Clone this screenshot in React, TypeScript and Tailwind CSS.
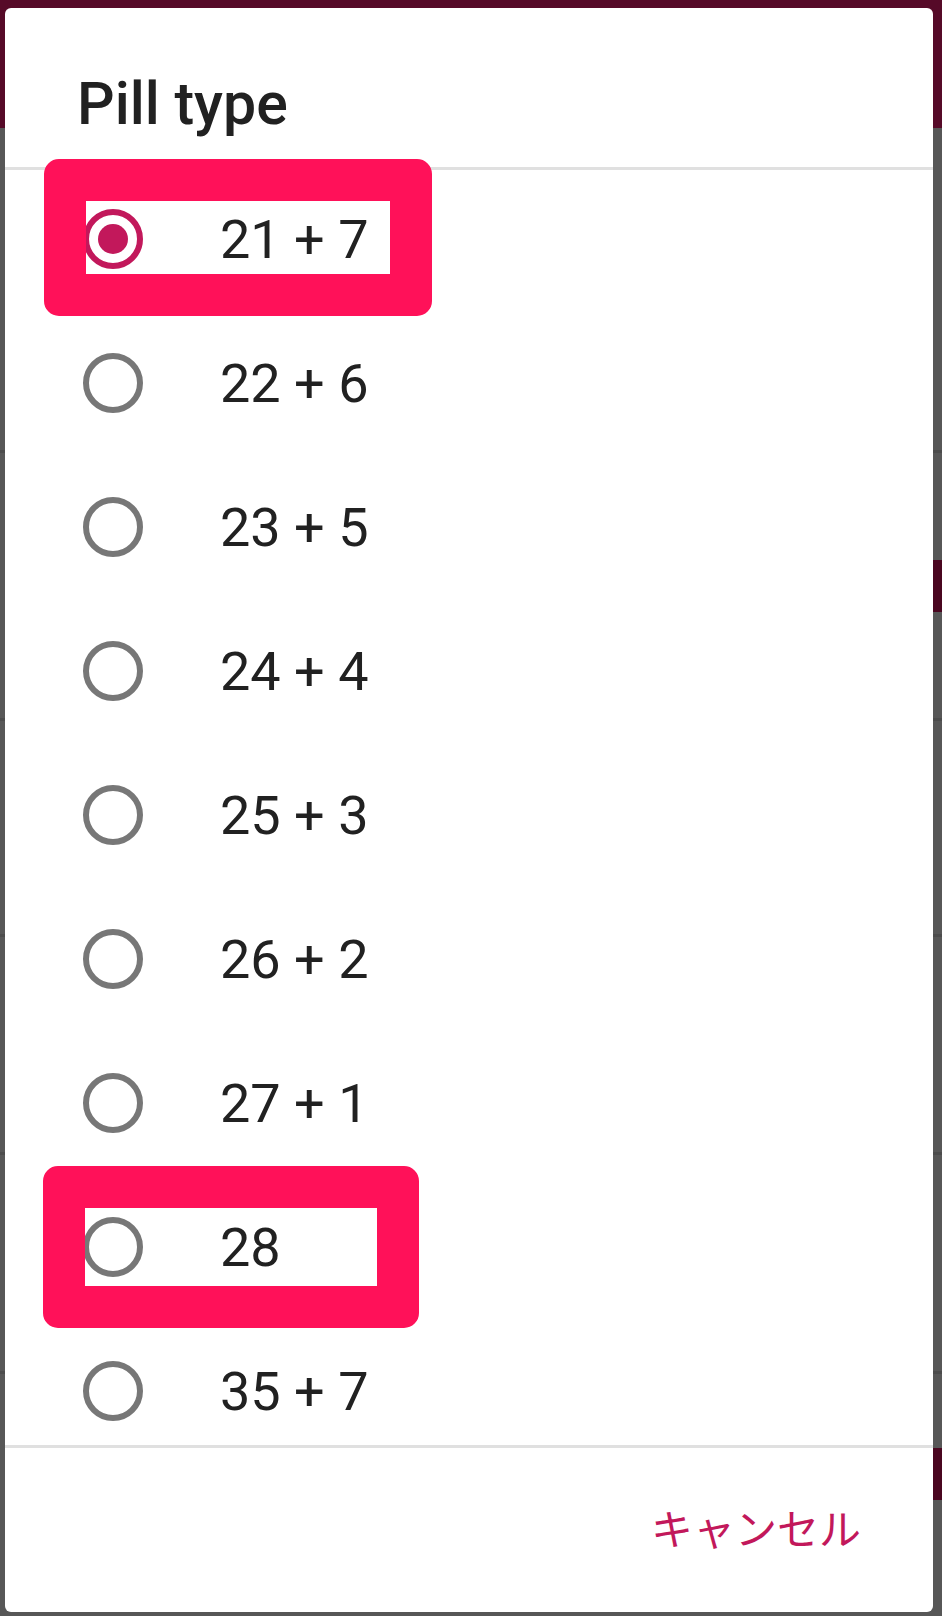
const options = ['21 + 7', '22 + 6', '23 + 5', '24 + 4', '25 + 3', '26 + 2', '27 + 1', '28', '35 + 7'];

function Radio({ checked }: { checked: boolean }) {
  return (
    <div
      className={
        checked
          ? 'w-[60px] h-[60px] rounded-full border-[6px] border-[#c2185b] flex items-center justify-center shrink-0'
          : 'w-[60px] h-[60px] rounded-full border-[6px] border-[#777777] shrink-0'
      }
    >
      {checked && <div className="w-[30px] h-[30px] rounded-full bg-[#c2185b]" />}
    </div>
  );
}

export default function App() {
  return (
    <div
      className="relative w-[942px] h-[1616px] overflow-hidden bg-[#575757]"
      style={{ fontFamily: 'Roboto, "Noto Sans CJK JP", sans-serif' }}
    >
      {/* dimmed page behind the dialog */}
      <div className="flex flex-col">
        <div className="h-[128px] bg-[#560a28]" />
        <div className="h-[325px] border-b-[3px] border-[#4c4c4c]" />
        <div className="h-[268px] border-b-[3px] border-[#4c4c4c] flex justify-end items-center">
          <div className="w-[40px] h-[52px] rounded-[10px] bg-[#4a0620] -mr-[20px]" />
        </div>
        <div className="h-[216px] border-b-[3px] border-[#4c4c4c]" />
        <div className="h-[218px] border-b-[3px] border-[#4c4c4c]" />
        <div className="h-[219px] border-b-[3px] border-[#4c4c4c]" />
        <div className="h-[200px] flex justify-end items-center">
          <div className="w-[40px] h-[52px] rounded-[10px] bg-[#4a0620] -mr-[20px]" />
        </div>
      </div>

      {/* dialog */}
      <div className="absolute left-[5px] top-[8px] w-[928px] h-[1604px] bg-white rounded-[6px] flex flex-col overflow-hidden">
        <div className="h-[159px] pl-[72px] pt-[66px] shrink-0">
          <div className="text-[59px] leading-[60px] font-medium text-[#212121]">Pill type</div>
        </div>
        <div className="h-[1278px] overflow-hidden shrink-0 shadow-[inset_0_3px_0_#e0e0e0]">
          {options.map((o, i) => (
            <div key={o} className="h-[144px] flex items-center pl-[78px]">
              <Radio checked={i === 0} />
              <span className="ml-[77px] text-[54px] text-[#212121]">{o}</span>
            </div>
          ))}
        </div>
        <div className="flex-1 border-t-[3px] border-[#e0e0e0] flex items-center justify-end pr-[72px]">
          <span className="text-[42px] text-[#c2185b]">キャンセル</span>
        </div>
      </div>

      {/* annotation boxes */}
      <div className="absolute left-[44px] top-[159px] w-[388px] h-[157px] border-[42px] border-[#ff1159] rounded-[15px]" />
      <div className="absolute left-[43px] top-[1166px] w-[376px] h-[162px] border-[42px] border-[#ff1159] rounded-[15px]" />
    </div>
  );
}
